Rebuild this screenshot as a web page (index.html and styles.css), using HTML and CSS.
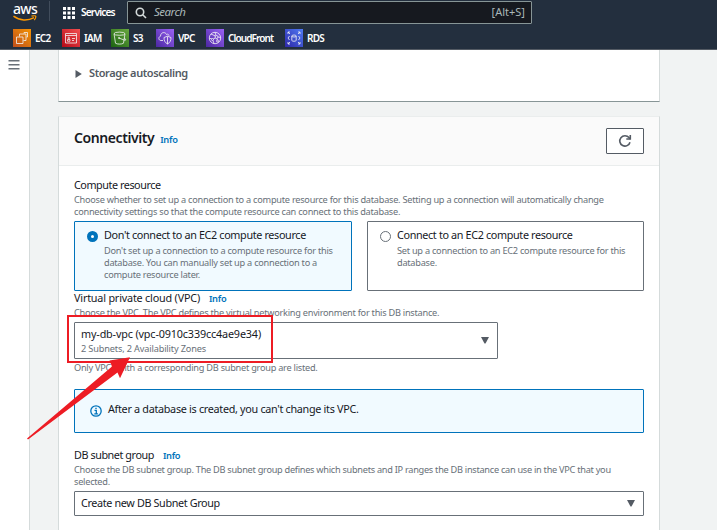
FILE: index.html
```
<!DOCTYPE html>
<html lang="en">
<head>
<meta charset="utf-8">
<title>Create database</title>
<link rel="stylesheet" href="styles.css">
</head>
<body>
<header class="top">
  <div class="nav">
    <div class="logo">
      <span class="logo-text">aws</span>
      <svg class="smile" width="26" height="6" viewBox="0 0 26 6"><path d="M.5 1.200C6.500 5.800 15 6 21 2.600" fill="none" stroke="#f90" stroke-width="1.500"/><path d="M18.500 1.200C21 .5 22.800.7 22.800 1.200C23 2.300 22.300 4 21.300 5" fill="none" stroke="#f90" stroke-width="1.200"/></svg>
    </div>
    <div class="services">
      <svg width="12" height="12" viewBox="0 0 12 12" fill="#fff"><path d="M0 0h3v3H0zM4.500 0h3v3h-3zM9 0h3v3H9zM0 4.500h3v3H0zM4.500 4.500h3v3h-3zM9 4.500h3v3H9zM0 9h3v3H0zM4.500 9h3v3h-3zM9 9h3v3H9z"/></svg>
      <span class="services-text">Services</span>
    </div>
    <div class="search">
      <svg width="12" height="12" viewBox="0 0 12 12" fill="none" stroke="#d5dbdb" stroke-width="1.600"><circle cx="5" cy="5" r="3.700"/><path d="M7.700 7.700L11 11"/></svg>
      <span class="placeholder">Search</span>
      <span class="shortcut">[Alt+S]</span>
    </div>
  </div>
  <div class="favs">
    <div class="fav ec2"><svg class="tile" viewBox="0 0 18 18"><path d="M3.500 8h6.500v6.500H3.500zM6.500 7.500V5h6.500V11.500h-2.500M11 4.500V3.500h3.500V8h-1"/></svg><span>EC2</span></div>
    <div class="fav iam"><svg class="tile" viewBox="0 0 18 18"><path d="M3.500 4.500h11v9.500h-11zM3.500 6.500h11M10 9.500h3M10 11.500h2M5.500 12.200v-1.700h2.500v1.700z"/><circle cx="6.700" cy="9" r=".8"/></svg><span>IAM</span></div>
    <div class="fav s3"><svg class="tile" viewBox="0 0 18 18"><ellipse cx="8.500" cy="4.700" rx="5.500" ry="1.600"/><path d="M3 4.700l1.500 9.500c1.500 1.200 6.500 1.200 8 0L14 4.700M8 9l5 2c2 .5 2.500-.3 1-1.300l-1-.7"/><circle cx="8" cy="9" r=".6"/></svg><span>S3</span></div>
    <div class="fav vpc"><svg class="tile" viewBox="0 0 18 18"><path d="M7 11.500H5C2.500 11.500 2 8 4.500 7.200 4.500 3 9.500 2.500 10.500 5.500c1-.8 2.300-.2 2.500 1.200M8 8.500l3.500-1.300L15 8.500c0 3-.8 5-3.500 6.500C8.800 13.500 8 11.500 8 8.500zM11.500 7.500V15"/></svg><span>VPC</span></div>
    <div class="fav cf"><svg class="tile" viewBox="0 0 18 18"><circle cx="9" cy="9" r="5.700"/><circle cx="10.500" cy="8" r="1.500"/><circle cx="6.500" cy="10.500" r="1"/><circle cx="11.500" cy="12" r="1"/><path d="M7.300 10l2-1M11 9.500l.3 1.500M5 5l4.500 2M9 3.300l1 3.200M3.600 9.500h2M12 8l2.500.5M7 11.500l1 3"/></svg><span>CloudFront</span></div>
    <div class="fav rds"><svg class="tile" viewBox="0 0 18 18"><path d="M3 5V3h2M3 3l2 2M13 3h2v2M15 3l-2 2M3 13v2h2M3 15l2-2M13 15h2v-2M15 15l-2-2M6.800 7v4.500c.8 1 3.600 1 4.400 0V7M4.500 7L3 9 4.500 11M13.500 7L15 9 13.500 11"/><ellipse cx="9" cy="7" rx="2.200" ry="1"/></svg><span>RDS</span></div>
  </div>
</header>
<div class="page">
  <aside class="side"><svg width="12" height="10" viewBox="0 0 12 10" fill="#687078"><path d="M.5 0h11v1.500H.5zM.5 4h11v1.500H.5zM.5 8h11v1.500H.5z"/></svg></aside>
  <main class="main">
    <section class="card storage">
      <svg width="7" height="8" viewBox="0 0 7 8"><path d="M.5 0L6.800 4 .5 8z" fill="#545b64"/></svg>
      <span class="expand">Storage autoscaling</span>
    </section>
    <section class="card connectivity">
      <div class="card-head">
        <h2 class="title">Connectivity</h2><a class="info head-info">Info</a>
        <button class="refresh"><svg width="14" height="14" viewBox="0 0 14 14" fill="none" stroke="#545b64" stroke-width="1.600"><path d="M12 8.200A5.200 5.200 0 1 1 11 3.600L12.300 5"/><path d="M12.300 1v4H8.300"/></svg></button>
      </div>
      <div class="card-body">
        <div class="label"><span class="l-compute">Compute resource</span></div>
        <div class="desc"><span class="d1">Choose whether to set up a connection to a compute resource for this database. Setting up a connection will automatically change</span><br><span class="d2">connectivity settings so that the compute resource can connect to this database.</span></div>
        <div class="options">
          <div class="option selected">
            <i class="radio on"></i>
            <div><div class="option-title">Don't connect to an EC2 compute resource</div>
            <div class="desc">Don't set up a connection to a compute resource for this<br>database. You can manually set up a connection to a<br>compute resource later.</div></div>
          </div>
          <div class="option">
            <i class="radio"></i>
            <div><div class="option-title">Connect to an EC2 compute resource</div>
            <div class="desc">Set up a connection to an EC2 compute resource for this<br>database.</div></div>
          </div>
        </div>
        <div class="label"><span class="l-vpc">Virtual private cloud (VPC)</span><a class="info">Info</a></div>
        <div class="desc">Choose the VPC. The VPC defines the virtual networking environment for this DB instance.</div>
        <div class="select vpc-select">
          <div><div class="value v1">my-db-vpc (vpc-0910c339cc4ae9e34)</div><div class="desc v2">2 Subnets, 2 Availability Zones</div></div>
          <svg class="caret" width="8" height="7" viewBox="0 0 8 7"><path d="M0 0h8L4.500 6.500h-1z" fill="#545b64"/></svg>
        </div>
        <div class="desc d4">Only VPCs with a corresponding DB subnet group are listed.</div>
        <div class="alert">
          <svg width="12" height="12" viewBox="0 0 12 12" fill="none" stroke="#0073bb" stroke-width="1.300"><circle cx="6" cy="6" r="5.200"/><path d="M4.500 5.400H6.300V8.800M4.300 8.800H7.900M5.300 3.300H6.700"/></svg>
          <span class="alert-text">After a database is created, you can't change its VPC.</span>
        </div>
        <div class="label"><span class="l-group">DB subnet group</span><a class="info">Info</a></div>
        <div class="desc"><span class="d5">Choose the DB subnet group. The DB subnet group defines which subnets and IP ranges the DB instance can use in the VPC that you</span><br><span>selected.</span></div>
        <div class="select group-select">
          <div class="value v3">Create new DB Subnet Group</div>
          <svg class="caret" width="8" height="7" viewBox="0 0 8 7"><path d="M0 0h8L4.500 6.500h-1z" fill="#545b64"/></svg>
        </div>
      </div>
    </section>
  </main>
</div>
<svg class="callout" width="717" height="530" viewBox="0 0 717 530"><rect x="68" y="316" width="204" height="46" fill="none" stroke="#ed1c24" stroke-width="2"/><path d="M27 438.500L112 366.500 109.500 360.500 130 357.300 120 378.300 117.500 372.500 28 439.500z" fill="#ed1c24"/></svg>
</body>
</html>
```
FILE: styles.css
```
* { box-sizing: border-box; }
body { margin: 0; width: 717px; height: 530px; overflow: hidden; position: relative; background: #f1f3f3; font-family: "Noto Sans", sans-serif; font-size: 10.8px; color: #16191f; white-space: nowrap; }
.top { height: 50px; background: #232f3e; border-bottom: 1px solid #545b64; color: #fff; }
.nav { height: 25px; display: flex; align-items: center; }
.logo { width: 50px; height: 20px; margin-top: -3px; padding-left: 13px; border-right: 1px solid #414d5c; display: flex; flex-direction: column; }
.logo-text { font-size: 14px; font-weight: 500; line-height: 15px; height: 13px; letter-spacing: -.7px; }
.smile { margin-top: 1px; flex: none; }
.services { width: 77px; padding-left: 13px; display: flex; align-items: center; gap: 6px; }
.services-text { font-size: 10.2px; font-weight: 600; letter-spacing: -.85px; margin-top: -2px; }
.search { width: 405px; height: 23px; border: 1px solid #879596; border-radius: 1px; background: #16191f; display: flex; align-items: center; padding: 0 6px 0 7px; color: #aab7b8; }
.placeholder { margin: -2px 0 0 7px; font-size: 11.5px; font-style: italic; letter-spacing: -.5px; }
.shortcut { margin: -2px 0 0 auto; font-size: 11px; }
.favs { height: 24px; display: flex; align-items: center; padding: 2px 0 0 13px; font-size: 10px; font-weight: 600; letter-spacing: -.75px; }
.fav { display: flex; align-items: center; gap: 4px; }
.tile { width: 18px; height: 18px; fill: none; stroke: #fff; stroke-width: .8; opacity: .95; }
.ec2 { width: 49px; } .iam { width: 49px; } .s3 { width: 45px; } .vpc { width: 50px; } .cf { width: 79px; letter-spacing: -.9px; }
.ec2 .tile { background: linear-gradient(45deg, #c8511b, #f90); }
.iam .tile { background: linear-gradient(45deg, #bd0816, #ff5252); }
.s3 .tile { background: linear-gradient(45deg, #1b660f, #6cae3e); }
.vpc .tile, .cf .tile { background: linear-gradient(45deg, #4d27a8, #a166ff); }
.rds .tile { background: linear-gradient(45deg, #2e27ad, #527fff); }
.page { display: flex; height: 480px; }
.side { width: 30px; background: #fff; border-right: 1px solid #d5dbdb; padding: 10px 0 0 8px; line-height: 0; }
.main { width: 602px; margin-left: 28px; }
.card { background: #fff; border: 1px solid #d5dbdb; }
.storage { height: 52px; border-top: 0; border-bottom-color: #879596; display: flex; align-items: center; padding: 0 0 4px 16px; color: #545b64; }
.expand { font-weight: 600; margin: -2px 0 0 7px; font-size: 11px; letter-spacing: -.42px; }
.connectivity { height: 430px; margin-top: 14px; border-top-color: #eaeded; }
.card-head { height: 49px; background: #fafafa; border-bottom: 1px solid #eaeded; display: flex; align-items: center; padding: 0 15px; }
.title { margin: -7px 0 0; font-size: 14px; font-weight: 600; letter-spacing: -.42px; }
.info { color: #0073bb; font-size: 9.3px; font-weight: 600; letter-spacing: -.3px; margin-left: 9px; }
.head-info { margin-left: 6px; margin-top: -3px; }
.refresh { margin-left: auto; width: 38px; height: 26px; border: 1px solid #545b64; border-radius: 1px; background: #fff; padding: 0; display: flex; align-items: center; justify-content: center; }
.card-body { padding: 12px 15px 0; }
.label { height: 16px; line-height: 14px; }
.l-compute { letter-spacing: -.45px; }
.l-vpc { letter-spacing: -.19px; }
.l-group { letter-spacing: -.43px; }
.desc { color: #687078; font-size: 9.2px; line-height: 12px; letter-spacing: -.25px; }
.d5 { letter-spacing: -.275px; }
.options { display: flex; gap: 15px; margin-top: 3px; }
.option { width: 277px; height: 70px; border: 1px solid #687078; border-radius: 1px; display: flex; padding: 6px 0 0 12px; }
.option.selected { width: 278px; border-color: #0073bb; background: #f1faff; }
.option-title { line-height: 14px; margin-bottom: 3px; letter-spacing: -.35px; }
.radio { width: 11px; height: 11px; border: 1px solid #687078; border-radius: 50%; background: #fff; margin: 3px 6px 0 0; flex: none; }
.radio.on { border: 4px solid #0073bb; }
.select { border: 1px solid #687078; border-radius: 1px; background: #fff; display: flex; align-items: center; justify-content: space-between; padding: 0 8px 0 6px; margin-top: 3px; }
.vpc-select { width: 424px; height: 37px; }
.value { line-height: 14px; margin-bottom: 2px; }
.v1 { letter-spacing: -.15px; }
.v2 { letter-spacing: -.16px; }
.v3 { letter-spacing: -.36px; }
.group-select { height: 25px; }
.d4 { margin-top: 3px; }
.alert { height: 44px; margin: 15px 0; border: 1px solid #0073bb; border-radius: 1px; background: #f1faff; display: flex; align-items: center; padding: 0 15px; gap: 6px; }
.alert-text { margin-top: -5px; letter-spacing: -.3px; }
.callout { position: absolute; left: 0; top: 0; }
```
